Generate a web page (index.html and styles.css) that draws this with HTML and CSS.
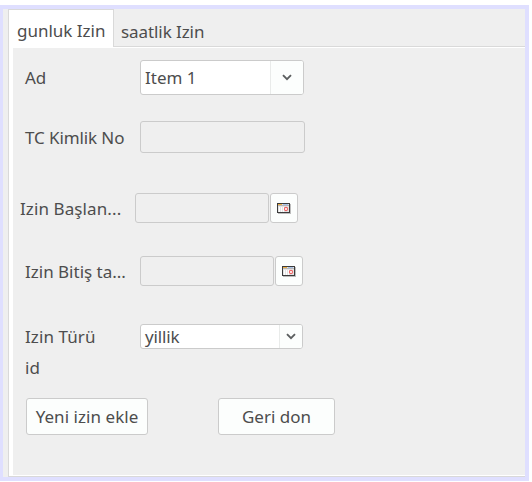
FILE: index.html
```html
<!DOCTYPE html>
<html lang="tr">
<head>
<meta charset="utf-8">
<title>Izin</title>
<link rel="stylesheet" href="styles.css">
</head>
<body>
<svg class="defs" width="0" height="0">
  <symbol id="chevron" viewBox="0 0 10 7"><path d="M1 1.2 5 5.2 9 1.2" fill="none" stroke="#5c5f60" stroke-width="1.9"/></symbol>
  <symbol id="calendar" viewBox="0 0 14 11">
    <path d="M1 1h13v10H1z" fill="#bdbdbd"/>
    <path d="M0 0h13v10H0z" fill="#3c3c3c"/>
    <path d="M1 1h11v8H1z" fill="#e4e4e4"/>
    <path d="M1 1h4v1H1z" fill="#f0b040"/>
    <path d="M6 1h5v1H6z" fill="#a9c4ea"/>
    <path d="M1 2h11v1H1z" fill="#b5b5b5"/>
    <path d="M2 4h1v5H2zM4 4h1v5H4zM6 4h1v5H6z" fill="#fff"/>
    <circle cx="9" cy="6" r="1.6" fill="#fff" stroke="#ee6565" stroke-width="1.1"/>
  </symbol>
</svg>
<div class="window">
  <div class="tabs">
    <div class="tab active">gunluk Izin</div>
    <div class="tab">saatlik Izin</div>
  </div>
  <div class="pane">
    <form class="form">
      <div class="row name">
        <label>Ad</label>
        <div class="select"><span class="value">Item 1</span><span class="arrow"><svg width="10" height="7"><use href="#chevron"/></svg></span></div>
      </div>
      <div class="row identity">
        <label>TC Kimlik No</label>
        <div class="input"></div>
      </div>
      <div class="row start">
        <label>Izin Başlan...</label>
        <div class="input date"></div>
        <div class="pick"><svg width="14" height="11"><use href="#calendar"/></svg></div>
      </div>
      <div class="row end">
        <label>Izin Bitiş ta...</label>
        <div class="input date"></div>
        <div class="pick"><svg width="14" height="11"><use href="#calendar"/></svg></div>
      </div>
      <div class="row kind">
        <label>Izin Türü</label>
        <div class="select compact"><span class="value">yillik</span><span class="arrow"><svg width="10" height="7"><use href="#chevron"/></svg></span></div>
      </div>
      <div class="row ident"><label>id</label></div>
      <div class="actions">
        <div class="button add">Yeni izin ekle</div>
        <div class="button back">Geri don</div>
      </div>
    </form>
  </div>
</div>
</body>
</html>
```
FILE: styles.css
```css
* { box-sizing: border-box; }
body {
  margin: 0;
  padding-top: 5px;
  background: #fff;
  color: #4d4d4d;
  font: 17px/24px "Noto Sans", sans-serif;
  white-space: nowrap;
  overflow: hidden;
}
.defs { display: block; }
svg { display: block; }
.window {
  width: 529px;
  height: 476px;
  border: solid #dfdfff;
  border-width: 4px 4px 4px 3px;
  background: #efefef;
  padding-left: 5px;
  display: flex;
  flex-direction: column;
}
.tabs { display: flex; height: 38px; }
.tab {
  flex: 1;
  border-bottom: 1px solid #d9d9d9;
  padding: 11px 0 0 7px;
  letter-spacing: -0.08px;
}
.tab.active {
  flex: none;
  width: 106px;
  background: #fff;
  border: 1px solid #d9d9d9;
  border-bottom: 0;
  padding: 9px 0 0 8px;
  letter-spacing: 0;
}
.pane {
  flex: none;
  height: 430px;
  background: #fff;
  border: solid #d9d9d9;
  border-width: 0 0 1px 1px;
  padding: 1px 0 1px 4px;
}
.form { height: 427px; background: #efefef; padding: 12px 0 0 12px; }
.row { display: flex; align-items: center; }
label { width: 115px; flex: none; }
.name { height: 35px; margin-bottom: 26px; }
.identity { height: 32px; margin-bottom: 40px; }
.start { height: 30px; margin: 0 0 33px -5px; }
.end { height: 30px; margin-bottom: 38px; }
.identity label, .start label, .end label { padding-top: 2px; }
.identity label { letter-spacing: -0.1px; }
.start label { letter-spacing: 0.1px; }
.kind label { letter-spacing: 0.1px; }
.kind { height: 25px; margin-bottom: 7px; }
.ident { height: 24px; margin-bottom: 18px; }
.input, .select, .pick, .button {
  border: 1px solid #cbcbcb;
  border-radius: 3px;
}
.input { width: 165px; height: 100%; }
.input.date { width: 134px; margin-right: 1px; }
.pick {
  width: 28px;
  height: 100%;
  background: #fcfefd;
  display: flex;
  align-items: center;
  justify-content: center;
}
.select {
  width: 164px;
  height: 100%;
  background: #fff;
  display: flex;
  overflow: hidden;
}
.value { flex: 1; padding-left: 4px; align-self: center; }
.arrow {
  width: 33px;
  background: #fcfefd;
  border-left: 1px solid #e9ebea;
  display: flex;
  align-items: center;
  justify-content: center;
}
.compact { width: 163px; }
.compact .value { letter-spacing: -0.15px; }
.compact .arrow { width: 23px; }
.actions { display: flex; gap: 70px; margin-left: 1px; }
.button {
  height: 37px;
  background: #fcfefd;
  text-align: center;
  line-height: 36px;
}
.add { width: 122px; letter-spacing: 0.05px; }
.back { width: 117px; }
```
